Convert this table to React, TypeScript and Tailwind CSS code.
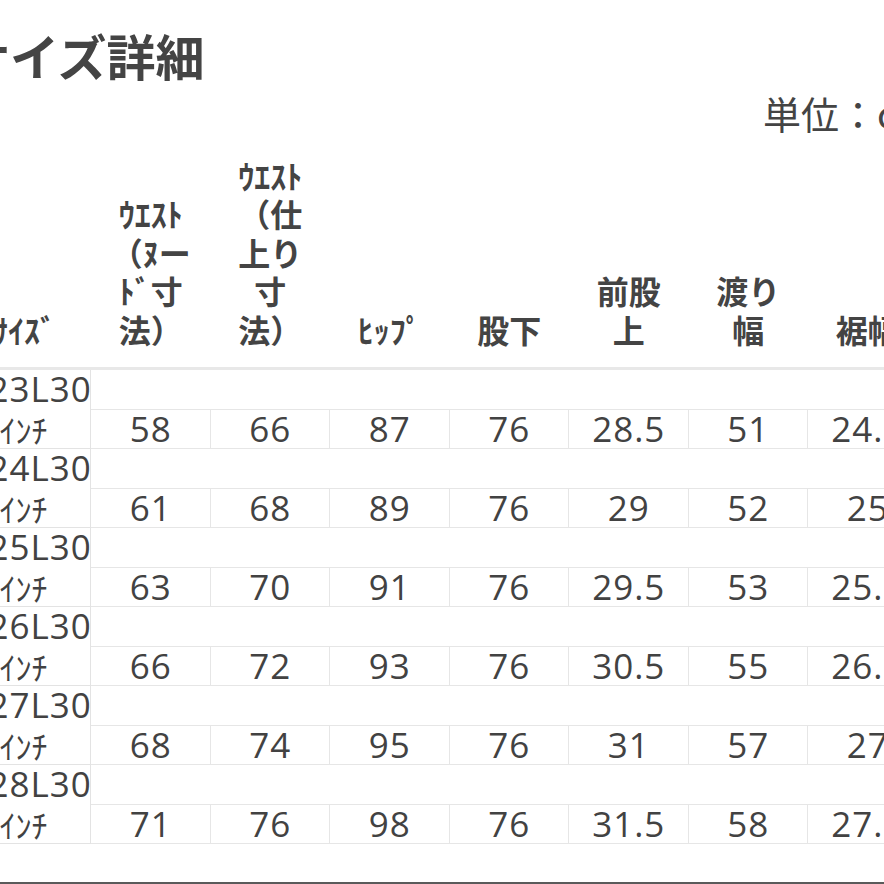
import React from 'react';

const headers: string[][] = [
  ['ｳｴｽﾄ', '（ﾇー', 'ﾄﾞ寸', '法）'],
  ['ｳｴｽﾄ', '（仕', '上り', '寸', '法）'],
  ['ﾋｯﾌﾟ'],
  ['股下'],
  ['前股', '上'],
  ['渡り', '幅'],
  ['裾幅'],
];

const rows: { size: string; values: string[] }[] = [
  { size: 'W23L30', values: ['58', '66', '87', '76', '28.5', '51', '24.5'] },
  { size: 'W24L30', values: ['61', '68', '89', '76', '29', '52', '25'] },
  { size: 'W25L30', values: ['63', '70', '91', '76', '29.5', '53', '25.5'] },
  { size: 'W26L30', values: ['66', '72', '93', '76', '30.5', '55', '26.5'] },
  { size: 'W27L30', values: ['68', '74', '95', '76', '31', '57', '27'] },
  { size: 'W28L30', values: ['71', '76', '98', '76', '31.5', '58', '27.5'] },
];

const font = { fontFamily: '"Noto Sans CJK JP", "Noto Sans", sans-serif' };
const numFont = { fontFamily: '"Open Sans", "Noto Sans CJK JP", sans-serif' };

function HeaderCell({ lines }: { lines: string[] }) {
  return (
    <div className="flex h-[234px] flex-col items-center justify-end pb-[19px] text-[32px] font-bold leading-[38.5px] text-[#444]">
      {lines.map((l, i) => (
        <div key={i} className="whitespace-nowrap">
          {l}
        </div>
      ))}
    </div>
  );
}

export default function App() {
  return (
    <div className="flex h-[884px] w-[884px] flex-col overflow-hidden bg-white text-[#424242]" style={font}>
      <div className="ml-[-43px] w-[1000px]">
        <h1 className="mt-[25px] whitespace-nowrap pl-[4px] text-[49px] font-bold leading-[60px] text-[#444]">
          サイズ詳細
        </h1>
        <p className="mt-[8px] whitespace-nowrap pl-[806px] text-[38px] leading-[40px] text-[#444]">単位：cm</p>

        <div className="grid grid-cols-[134px_repeat(7,119.5px)] border-b-[3px] border-[#e8e8e8]">
          <HeaderCell lines={['ｻｲｽﾞ']} />
          {headers.map((h, i) => (
            <HeaderCell key={i} lines={h} />
          ))}
        </div>

        {rows.map((r) => (
          <div key={r.size} className="grid grid-cols-[134px_repeat(7,119.5px)]">
            <div className="row-span-2 flex flex-col border-r border-b border-[#e3e3e3] text-[35px]" style={numFont}>
              <div className="flex h-[39px] items-center justify-center whitespace-nowrap tracking-[1px]">{r.size}</div>
              <div className="flex h-[39px] items-center justify-center whitespace-nowrap text-[32px]" style={font}>
                ｲﾝﾁ
              </div>
            </div>
            <div className="col-span-7 h-[39px]" />
            {r.values.map((v, i) => (
              <div
                key={i}
                className="flex h-[40px] items-center justify-center border-y border-r border-[#e6e6e6] pl-[1px] text-[35px] tracking-[1px]"
                style={numFont}
              >
                {v}
              </div>
            ))}
          </div>
        ))}
      </div>
      <div className="mt-auto h-[2px] bg-[#5a5a5a]" />
    </div>
  );
}
